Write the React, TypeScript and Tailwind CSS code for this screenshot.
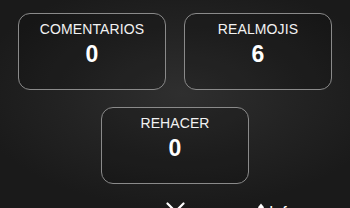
function StatCard({ label, value }: { label: string; value: number }) {
    return (
        <div className="w-[148px] h-[77px] rounded-[12px] border border-[#8a8a8a] bg-black/15 flex flex-col items-center pt-[6px]">
            <span className="text-[14px] leading-[18px] text-[#f2f2f2] tracking-[0.1px]">{label}</span>
            <span className="text-[23px] leading-[26px] font-bold text-white mt-[3px]">{value}</span>
        </div>
    );
}

export default function App() {
    return (
        <div
            className="w-[350px] h-[208px] overflow-hidden flex flex-col items-center bg-[#1b1b1b] bg-[radial-gradient(ellipse_60%_55%_at_52%_45%,#2f2f2f_0%,#232323_55%,#1a1a1a_100%)]"
            style={{ fontFamily: '"Liberation Sans", Arial, sans-serif' }}
        >
            <div className="flex gap-[18px] pt-[13px]">
                <StatCard label="COMENTARIOS" value={0} />
                <StatCard label="REALMOJIS" value={6} />
            </div>
            <div className="mt-[17px]">
                <StatCard label="REHACER" value={0} />
            </div>
            <div className="relative w-full mt-[18px] h-[24px]">
                <svg className="absolute left-[166px] top-0" width="19" height="19" viewBox="0 0 19 19">
                    <path d="M1.5 1.5 L17.5 17.5 M17.5 1.5 L1.5 17.5" stroke="white" strokeWidth="2.2" strokeLinecap="round" />
                </svg>
                <div className="absolute left-[258px] top-[1px] flex items-start gap-[5px] text-white">
                    <svg width="6" height="14" viewBox="0 0 6 14">
                        <path d="M3 0.5 L5.8 4 L5.8 14 L0.2 14 L0.2 4 Z" fill="white" />
                    </svg>
                    <span className="text-[16px] leading-[18px] mt-[1px]">Info</span>
                </div>
            </div>
        </div>
    );
}
